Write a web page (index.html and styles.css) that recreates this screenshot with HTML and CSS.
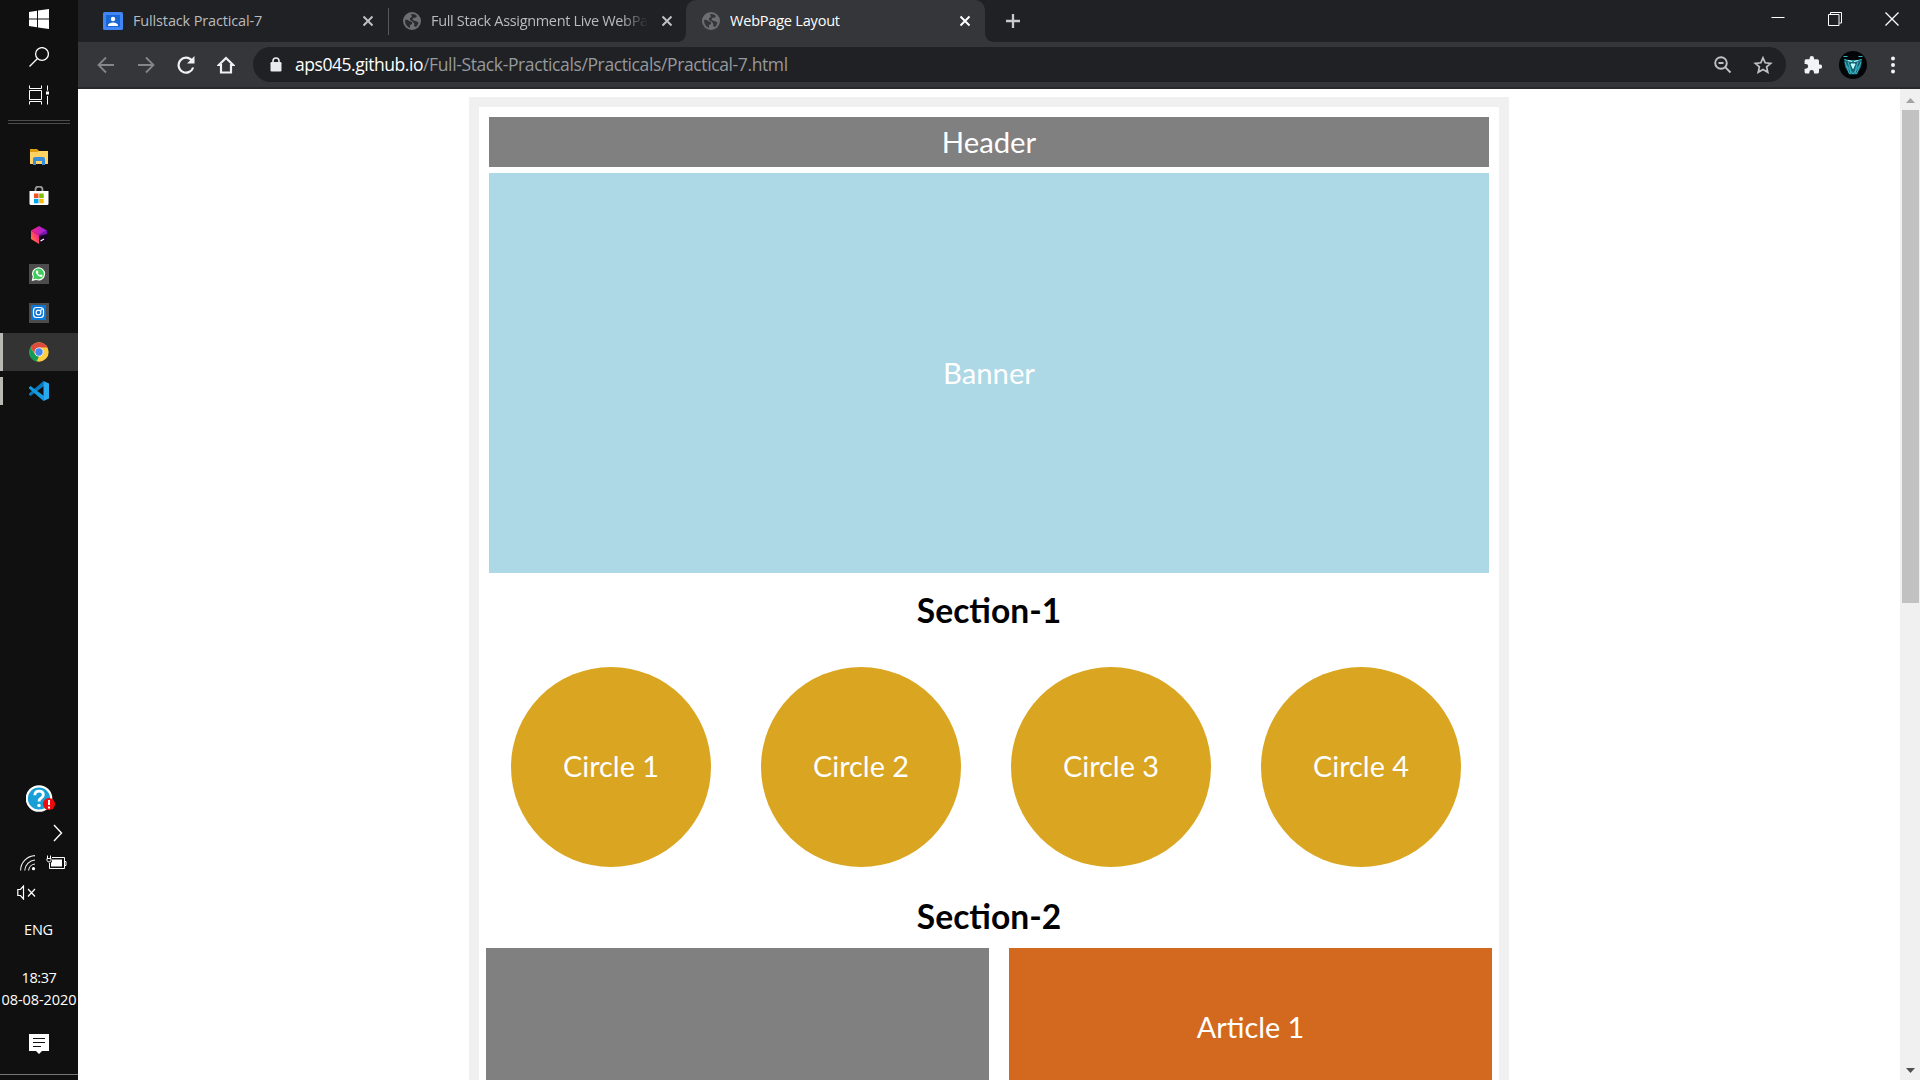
FILE: index.html
```html
<!DOCTYPE html>
<html lang="en">
<head>
<meta charset="utf-8">
<title>WebPage Layout</title>
<link rel="stylesheet" href="styles.css">
</head>
<body>
<div class="desktop">
  <aside class="taskbar">
    <div class="slot start"><svg width="20" height="20" viewBox="0 0 20 20" fill="#fff"><path d="M0 3l8-1.200v7.700H0zM9 1.600L20 0v9.500H9zM0 10.500h8v7.700L0 17zM9 10.500h11V20L9 18.400z"/></svg></div>
    <div class="slot search"><svg width="20" height="20" viewBox="0 0 20 20" fill="none" stroke="#fff" stroke-width="1.300"><circle cx="13" cy="7" r="6.400"/><path d="M8.500 11.500L.5 19.500"/></svg></div>
    <div class="slot view"><svg width="20" height="20" viewBox="0 0 20 20" fill="none" stroke="#fff"><path d="M.5 .5v3h12v-3M.5 5.500h12v9H.5zM.5 19.500v-3h12v3M18.500 .5v5M18.500 11v8.500"/><path d="M17 6.500h3v3h-3z" fill="#fff" stroke="none"/></svg></div>
    <div class="divider"></div>
    <div class="slot app"><svg width="20" height="20" viewBox="0 0 20 20"><path d="M1 2h7l2 2v4H1z" fill="#df9c0c"/><path d="M1 5h7l2-1h9v13H1z" fill="#ffd261"/><path d="M4 18v-6q0-2 2-2h8q2 0 2 2v6h-3v-4H7v4z" fill="#398cdb"/></svg></div>
    <div class="slot app"><svg width="20" height="20" viewBox="0 0 20 20"><path d="M6.500 6V3.500q0-3 3.500-3t3.500 3V6" fill="none" stroke="#999" stroke-width="1.800"/><path d="M.5 5h19v12.500q0 1.500-1.500 1.500H2Q.5 19 .5 17.500z" fill="#fff"/><path d="M5 7.500h4.500V12H5z" fill="#f25022"/><path d="M10.200 7.500h4.500V12h-4.500z" fill="#7fba00"/><path d="M5 12.800h4.500v4.500H5z" fill="#00a4ef"/><path d="M10.200 12.800h4.500v4.500h-4.500z" fill="#ffb900"/></svg></div>
    <div class="slot app"><svg width="20" height="20" viewBox="0 0 20 20"><defs><linearGradient id="left" x1="0" y1="1" x2="1" y2="0"><stop stop-color="#ff9a1f"/><stop offset=".6" stop-color="#ff3475"/><stop offset="1" stop-color="#d61cc0"/></linearGradient><linearGradient id="top"><stop stop-color="#fc237e"/><stop offset="1" stop-color="#9320e8"/></linearGradient></defs><path d="M2 5.500L10 10v9L2 14z" fill="url(#left)"/><path d="M2 5.500L10 1l8 4.500-8 4.500z" fill="url(#top)"/><path d="M18 5.500v4l-8 9.500v-9z" fill="#7a16b4"/><path d="M10 11l8-2v5.500L10 19z" fill="#16051f"/><path d="M11.500 16l3.500-2" stroke="#fff" stroke-width="1.300"/></svg></div>
    <div class="slot app"><svg width="20" height="20" viewBox="0 0 20 20"><path d="M0 0h20v20H0z" fill="#4c4c4c"/><path d="M4.300 12.800A6 6 0 1 1 7 15.300L3.500 16.200z" fill="#3ecb5b" stroke="#f4fff5" stroke-width="1.200"/><path d="M7.500 6.500q-1.500 1.200 0 3.500t4.500 3q1.500 0 1.700-1.600L12 10.300l-1 .9q-1.700-.8-2.100-2.100l.7-.9-.8-1.700z" fill="#fff"/></svg></div>
    <div class="slot app"><svg width="20" height="20" viewBox="0 0 20 20" fill="none" stroke="#fff" stroke-width="1.200"><path d="M0 0h20v20H0z" fill="#4c4c4c" stroke="none"/><path d="M2 2h15v15H2z" fill="#0b78d8" stroke="none"/><rect x="4.500" y="4.500" width="10" height="10" rx="3"/><circle cx="9.500" cy="9.500" r="2.400"/><circle cx="12.500" cy="6.600" r=".4"/></svg></div>
    <div class="slot app running current"><svg width="20" height="20" viewBox="0 0 20 20"><circle cx="10" cy="10" r="9.700" fill="#ffcd40"/><path d="M1.600 5.200A9.700 9.700 0 0 1 18.500 5.500H10L6 12z" fill="#dd4b3e"/><path d="M1.500 5.300L6 12.500l4 2-2.500 5A9.700 9.700 0 0 1 1.500 5.300z" fill="#119d58"/><circle cx="10" cy="10" r="4.500" fill="#f4f4f4"/><circle cx="10" cy="10" r="3.700" fill="#4587f3"/></svg></div>
    <div class="slot app running"><svg width="20" height="20" viewBox="0 0 20 20"><path d="M14.500 0L0 12.500v1.200L1.500 15 15 5z" fill="#0879be"/><path d="M14.500 20L0 7.500V6.300L1.500 5 15 15z" fill="#139be0"/><path d="M14.500 0L20 2.500v15L14.500 20z" fill="#29a9f0"/></svg></div>
    <div class="grow"></div>
    <div class="help"><svg width="30" height="28" viewBox="0 0 30 28"><circle cx="13" cy="13.500" r="12.200" fill="#189fd5" stroke="#fff" stroke-width="2.200"/><path d="M8.800 10.200q.2-4 4.300-4t4.300 3.400q0 2.200-2.200 3.400-2.200 1.300-2.200 3.500" fill="none" stroke="#fff" stroke-width="2.800"/><circle cx="13" cy="20.500" r="1.700" fill="#fff"/><circle cx="23" cy="19" r="6" fill="#f20a0a"/><path d="M23 15v5M23 21.500v2" stroke="#fff" stroke-width="2"/></svg></div>
    <div class="chev"><svg width="10" height="18" viewBox="0 0 10 18" fill="none" stroke="#fff" stroke-width="1.400"><path d="M1 1l7.500 8L1 17"/></svg></div>
    <div class="tray">
      <svg width="16" height="16" viewBox="0 0 16 16" fill="none" stroke="#eee"><path d="M.6 15.500A15 15 0 0 1 15 .6M4.700 15.500A11 11 0 0 1 15 5M8.600 15.500A7 7 0 0 1 15 9" stroke-width="1.100"/><circle cx="13.500" cy="13.700" r="1.600" fill="#fff" stroke="none"/></svg>
      <svg width="21" height="15" viewBox="0 0 21 15" fill="none" stroke="#fff"><path d="M6 2.500h12.500v11H3.500V8M18.500 6.500h1.500v4h-1.500M1 3.500h4v2Q4.500 7 3 7T1 5.500zM1.500 3V.5M4.500 3V.5"/><path d="M6 4.500h10v7H5V8l1-1.500z" fill="#fff" stroke="none"/></svg>
    </div>
    <div class="volume"><svg width="19" height="15" viewBox="0 0 19 15" fill="none" stroke="#fff" stroke-width="1.200"><path d="M.8 4.500h2.700L6.500 1v13l-3-3.500H.8zM11 4l7 7.500M18 4l-7 7.500"/></svg></div>
    <div class="lang">ENG</div>
    <div class="clock"><span>18:37</span><span class="date">08-08-2020</span></div>
    <div class="notes"><svg width="20" height="20" viewBox="0 0 20 20"><path d="M0 0h20v17h-7l-3 3-3-3H0z" fill="#fff"/><path d="M4 4.500h12M4 8.500h12M4 12.500h8" stroke="#101010"/></svg></div>
    <div class="peek"></div>
  </aside>

  <main class="browser">
    <header class="tabs">
      <div class="tab first">
        <svg class="fav" width="20" height="18" viewBox="0 0 20 18"><rect width="20" height="18" rx="1.500" fill="#4285f4"/><path d="M3 3h14v12H3z" fill="#1967d2"/><circle cx="10" cy="7" r="2.200" fill="#fff"/><path d="M5 14v-1q1-2.500 5-2.500t5 2.500v1z" fill="#fff"/></svg>
        <span class="title t1">Fullstack Practical-7</span>
        <svg class="x" width="12" height="12" viewBox="0 0 12 12"><path d="M1.500 1.500l9 9M10.500 1.500l-9 9"/></svg>
      </div>
      <div class="tab second">
        <svg class="globe" width="18" height="18" viewBox="0 0 18 18"><circle cx="9" cy="9" r="9" fill="#6b6e72"/><path d="M2 8q3-1 4 1l3 1v2l-2 1v3Q2 14 2 8zM8 2q4-.5 6 2l-1 1.500-3 .5-.5 2L12 9l3 1q1 1-.5 3L13 15l-2-1 .5-2-2-2.500L7 8V6l2-1z" fill="#292a2d"/></svg>
        <span class="title t2">Full Stack Assignment Live WebPa</span>
        <svg class="x" width="12" height="12" viewBox="0 0 12 12"><path d="M1.500 1.500l9 9M10.500 1.500l-9 9"/></svg>
      </div>
      <div class="tab active">
        <svg class="globe" width="18" height="18" viewBox="0 0 18 18"><circle cx="9" cy="9" r="9" fill="#6b6e72"/><path d="M2 8q3-1 4 1l3 1v2l-2 1v3Q2 14 2 8zM8 2q4-.5 6 2l-1 1.500-3 .5-.5 2L12 9l3 1q1 1-.5 3L13 15l-2-1 .5-2-2-2.500L7 8V6l2-1z" fill="#35363a"/></svg>
        <span class="title t3">WebPage Layout</span>
        <svg class="x" width="12" height="12" viewBox="0 0 12 12"><path d="M1.500 1.500l9 9M10.500 1.500l-9 9"/></svg>
      </div>
      <svg class="plus" width="16" height="16" viewBox="0 0 16 16"><path d="M8 1v14M1 8h14" stroke="#c8cacd" stroke-width="2.300"/></svg>
      <div class="window-buttons">
        <svg width="14" height="14" viewBox="0 0 14 14"><path d="M.5 5.500h13"/></svg>
        <svg width="14" height="14" viewBox="0 0 14 14"><path d="M.5 2.500h10.500v11H.5zM2.500 2.500v-2h11v10.500h-2"/></svg>
        <svg width="14" height="14" viewBox="0 0 14 14"><path d="M.5 .5l13 13M13.500 .5l-13 13" stroke-width="1.300"/></svg>
      </div>
    </header>

    <nav class="toolbar">
      <div class="nav-icons">
        <svg class="dim" width="18" height="18" viewBox="0 0 18 18"><path d="M17 9H2M9 1.500L1.500 9 9 16.500"/></svg>
        <svg class="dim" width="18" height="18" viewBox="0 0 18 18"><path d="M1 9h15M9 1.500L16.500 9 9 16.500"/></svg>
        <svg width="18" height="18" viewBox="0 0 18 18"><path d="M15 4.500A7.500 7.500 0 1 0 16.200 11.500"/><path d="M17.500 0v7.500H10z" fill="#f1f1f1" stroke="none"/></svg>
        <svg width="18" height="18" viewBox="0 0 18 18"><path d="M1.800 9H4v7.500h10V9h2.200L9 2z"/></svg>
      </div>
      <div class="address">
        <svg class="lock" width="12" height="15" viewBox="0 0 12 15"><path d="M3 6V4q0-3 3-3t3 3v2" fill="none" stroke="#e8eaed" stroke-width="1.600"/><rect x=".5" y="5" width="11" height="9.500" rx="1.200" fill="#e8eaed"/></svg>
        <div class="url"><span class="host">aps045.github.io</span><span class="path">/Full-Stack-Practicals/Practicals/Practical-7.html</span></div>
        <svg class="zoom" width="18" height="18" viewBox="0 0 18 18" fill="none" stroke="#bfc1c4" stroke-width="1.900"><circle cx="7" cy="7" r="5.800"/><path d="M11.200 11.200l5.300 5.300M4.500 7h5"/></svg>
        <svg width="20" height="18" viewBox="0 0 20 18" fill="none" stroke="#bfc1c4" stroke-width="1.700"><path d="M10 1.800l2.200 5 5.500.5-4.100 3.600 1.200 5.400L10 13.500l-4.800 2.800 1.200-5.400-4.100-3.600 5.500-.5z"/></svg>
      </div>
      <svg class="puzzle" width="18" height="18" viewBox="0 0 18 18"><path d="M16 8.500h-1V5q0-1.700-1.700-1.700H10V2.200a2.200 2.200 0 0 0-4.400 0v1.100H2Q.6 3.300.6 5v3h1.200a2.300 2.300 0 0 1 0 4.700H.6v3.200q0 1.700 1.700 1.700h3v-1.200a2.300 2.300 0 0 1 4.700 0v1.200h3.300q1.700 0 1.700-1.700V12.700h1a2.100 2.100 0 0 0 0-4.200z" fill="#f1f3f4"/></svg>
      <svg class="avatar" width="28" height="28" viewBox="0 0 28 28"><circle cx="14" cy="14" r="14" fill="#020507"/><path d="M5 8l5 1h8l5-1-1 8-4.500 7.500h-7L6 16z" fill="#1a6574"/><path d="M5.500 8.500l4.500 1.500h8l4.500-1.500M6 11l4.500 12M22 11l-4.500 12M9 11l2 6 1 6M19 11l-2 6-1 6M4.500 5.500h4M19.500 5.500h4M8 15l6 8 6-8" fill="none" stroke="#35b7c6"/><path d="M9 9.500l4 1M19 9.500l-4 1M12 13h4l-2 4.500z" fill="#bffcff" stroke="#bffcff"/></svg>
      <svg width="6" height="18" viewBox="0 0 6 18" fill="#f1f3f4"><circle cx="3" cy="2.500" r="2"/><circle cx="3" cy="9" r="2"/><circle cx="3" cy="15.500" r="2"/></svg>
    </nav>

    <div class="viewport">
      <div class="content">
        <div class="container">
          <div class="block header">Header</div>
          <div class="block banner">Banner</div>
          <h2>Section-1</h2>
          <div class="circles">
            <div class="circle">Circle 1</div>
            <div class="circle">Circle 2</div>
            <div class="circle">Circle 3</div>
            <div class="circle">Circle 4</div>
          </div>
          <h2 class="second-heading">Section-2</h2>
          <div class="articles">
            <div class="feature"></div>
            <div class="article">Article 1</div>
          </div>
        </div>
      </div>
      <div class="scrollbar">
        <svg class="up" width="9" height="5" viewBox="0 0 9 5"><path d="M0 5l4.500-5L9 5z" fill="#a3a3a3"/></svg>
        <div class="thumb"></div>
        <svg class="down" width="9" height="5" viewBox="0 0 9 5"><path d="M0 0l4.500 5L9 0z" fill="#505050"/></svg>
      </div>
    </div>
  </main>
</div>
</body>
</html>
```
FILE: styles.css
```css
* { box-sizing: border-box; }
body { margin: 0; overflow: hidden; }
svg { display: block; flex: none; }
.desktop { display: flex; width: 1920px; height: 1080px; overflow: hidden; font-family: "Open Sans", "Noto Sans", sans-serif; }

.taskbar { width: 78px; flex: none; background: #101010; color: #fff; display: flex; flex-direction: column; }
.slot { display: flex; align-items: center; justify-content: center; flex: none; height: 38px; }
.divider { height: 4px; margin: 6px 8px 14px; border-top: 1px solid #4b4b4b; border-bottom: 1px solid #4b4b4b; flex: none; }
.app { margin-bottom: 1px; }
.running { border-left: 3px solid #b9b9b3; padding-right: 3px; }
.current { background: #333; }
.running:not(.current) { height: 28px; margin-top: 5px; }
.grow { flex: 1; }
.help { display: flex; height: 28px; padding-left: 26px; margin-bottom: 11px; }
.chev { height: 18px; padding-left: 53px; margin-bottom: 13px; }
.tray { display: flex; gap: 10px; height: 16px; padding-left: 20px; margin-bottom: 14px; }
.volume { height: 15px; padding-left: 17px; margin-bottom: 19px; }
.lang { height: 22px; line-height: 22px; text-align: center; font-size: 14.500px; letter-spacing: -.2px; padding-right: 1px; }
.clock { display: flex; flex-direction: column; align-items: center; font-size: 14.500px; line-height: 22px; margin-top: 26px; letter-spacing: -.4px; white-space: nowrap; }
.date { letter-spacing: -.05px; }
.notes { display: flex; justify-content: center; height: 20px; margin-top: 23px; }
.peek { height: 6px; margin-top: 20px; border-top: 1px solid #777; flex: none; }

.browser { flex: 1; min-width: 0; display: flex; flex-direction: column; }
.tabs { height: 42px; background: #202124; display: flex; align-items: center; flex: none; padding-left: 9px; }
.tab { height: 42px; display: flex; align-items: center; color: #b8bbbf; flex: none; }
.title { font-size: 14.500px; line-height: 20px; white-space: nowrap; overflow: hidden; flex: 1; }
.x { stroke: #bdc1c6; stroke-width: 2; }
.first { width: 301px; padding: 0 14px 0 16px; gap: 10px; }
.second { width: 298px; padding: 0 13px 0 14px; gap: 10px; border-left: 1px solid #55575a; border-image: linear-gradient(transparent 9px, #55575a 9px 34px, transparent 34px) 1; }
.second .title { margin-right: 1px; -webkit-mask-image: linear-gradient(90deg, #000 87%, transparent 99%); mask-image: linear-gradient(90deg, #000 87%, transparent 99%); }
.active { width: 299px; padding: 0 14px 0 16px; gap: 10px; background: #35363a; border-radius: 10px 10px 0 0; color: #fff; position: relative; }
.active::before, .active::after { content: ""; position: absolute; bottom: 0; width: 8px; height: 8px; }
.active::before { left: -8px; background: radial-gradient(circle at 0 0, transparent 7.500px, #35363a 8px); }
.active::after { right: -8px; background: radial-gradient(circle at 100% 0, transparent 7.500px, #35363a 8px); }
.active .x { stroke: #fff; }
.t1 { letter-spacing: -.15px; }
.t2 { letter-spacing: -.33px; }
.t3 { letter-spacing: -.2px; }
.plus { margin-left: 20px; }
.window-buttons { margin-left: auto; display: flex; gap: 43px; padding-right: 21px; margin-bottom: 5px; }
.window-buttons svg { fill: none; stroke: #fff; stroke-width: 1; }

.toolbar { height: 47px; background: #35363a; border-bottom: 2px solid #28292c; display: flex; align-items: center; flex: none; padding-left: 19px; padding-right: 23px; }
.nav-icons { display: flex; gap: 22px; }
.nav-icons svg { fill: none; stroke: #f1f1f1; stroke-width: 2.200; }
.nav-icons .dim { stroke: #85868a; stroke-width: 1.800; }
.address { width: 1533px; height: 35px; border-radius: 18px; background: #202124; margin-left: 18px; padding: 0 13px 0 17px; display: flex; align-items: center; flex: none; }
.url { flex: 1; margin-left: 13px; padding-bottom: 1px; font-size: 17.500px; line-height: 24px; white-space: nowrap; }
.host { color: #fff; letter-spacing: -.45px; }
.path { color: #96999d; letter-spacing: -.38px; }
.zoom { margin-right: 21px; }
.puzzle { margin-left: 18px; }
.avatar { margin: 0 23px 0 17px; }

.viewport { flex: 1; min-height: 0; display: flex; background: #fff; }
.content { flex: 1; padding-top: 8px; overflow: hidden; font-family: Lato, sans-serif; }
.container { width: 1040px; height: 1500px; margin: 0 auto; border: 10px solid #f0f0f0; padding: 10px; }
.block { color: #fff; display: flex; align-items: center; justify-content: center; font-size: 29.300px; padding-bottom: 2px; }
.header { height: 50px; background: #808080; }
.banner { height: 400px; margin-top: 6px; background: #add8e6; }
h2 { margin: 17px 0 0; height: 41px; line-height: 40px; font-size: 33.600px; text-align: center; font-weight: 700; }
.circles { display: flex; gap: 50px; padding: 36px 0 0 22px; }
.circle { width: 200px; height: 200px; border-radius: 50%; background: #daa520; color: #fff; display: flex; align-items: center; justify-content: center; font-size: 28.800px; padding-bottom: 2px; }
.second-heading { margin-top: 29px; }
.articles { display: flex; gap: 20px; margin: 11px -3px 0; height: 400px; }
.feature { width: 503px; background: #808080; }
.article { flex: 1; background: #d2691e; color: #fff; font-size: 28.800px; line-height: 40px; text-align: center; padding-top: 59px; }

.scrollbar { width: 20px; background: #f0f0f0; display: flex; flex-direction: column; align-items: center; }
.up { margin-top: 9px; }
.thumb { width: 17px; height: 493px; margin-top: 7px; background: #c1c1c1; }
.down { margin-top: auto; margin-bottom: 7px; }
```
